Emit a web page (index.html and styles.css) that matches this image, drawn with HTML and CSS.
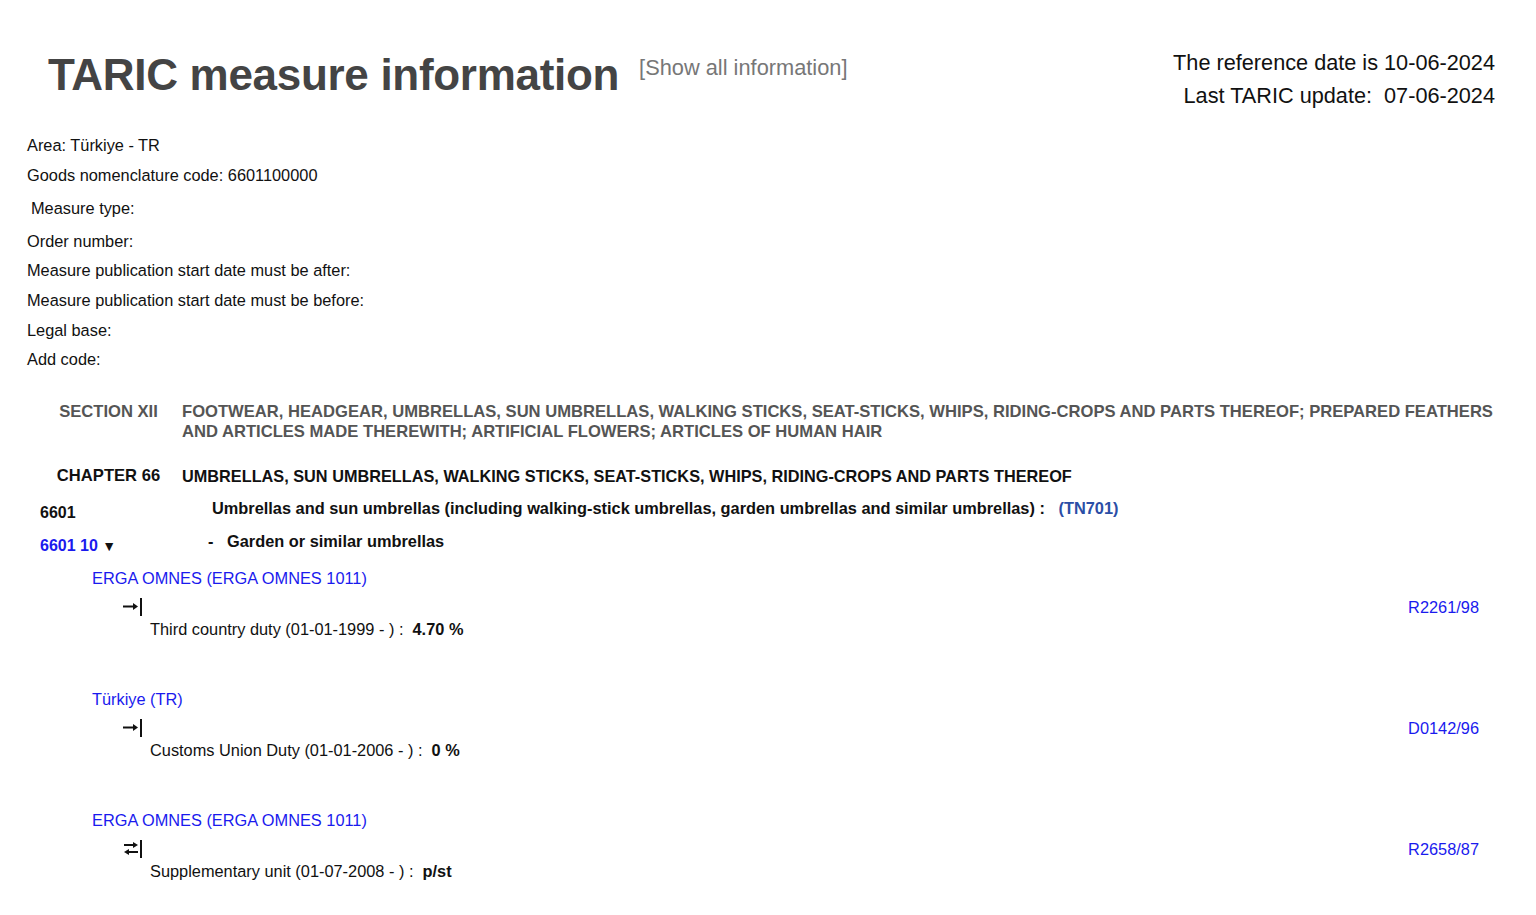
FILE: index.html
```html
<!DOCTYPE html>
<html lang="en">
<head>
    <meta charset="UTF-8">
    <title>TARIC measure information</title>
    <link rel="stylesheet" href="styles.css">
</head>
<body>
    <div class="header">
        <div class="title-wrap">
            <h1>TARIC measure information</h1>
            <a class="show-all" href="#">[Show all information]</a>
        </div>
        <div class="dates">
            <div>The reference date is 10-06-2024</div>
            <div>Last TARIC update:&nbsp; 07-06-2024</div>
        </div>
    </div>

    <div class="criteria">
        <div class="crit">Area: Türkiye - TR</div>
        <div class="crit">Goods nomenclature code: 6601100000</div>
        <div class="crit indent">Measure type:</div>
        <div class="crit">Order number:</div>
        <div class="crit">Measure publication start date must be after:</div>
        <div class="crit">Measure publication start date must be before:</div>
        <div class="crit">Legal base:</div>
        <div class="crit">Add code:</div>
    </div>

    <div class="nomen">
        <div class="nrow section">
            <div class="nlabel">SECTION XII</div>
            <div class="ntext">FOOTWEAR, HEADGEAR, UMBRELLAS, SUN UMBRELLAS, WALKING STICKS, SEAT-STICKS, WHIPS, RIDING-CROPS AND PARTS THEREOF; PREPARED FEATHERS AND ARTICLES MADE THEREWITH; ARTIFICIAL FLOWERS; ARTICLES OF HUMAN HAIR</div>
        </div>
        <div class="nrow chapter">
            <div class="nlabel">CHAPTER 66</div>
            <div class="ntext">UMBRELLAS, SUN UMBRELLAS, WALKING STICKS, SEAT-STICKS, WHIPS, RIDING-CROPS AND PARTS THEREOF</div>
        </div>
        <div class="crow">
            <div class="code">6601</div>
            <div class="desc">Umbrellas and sun umbrellas (including walking-stick umbrellas, garden umbrellas and similar umbrellas) :&nbsp;&nbsp; <a class="note" href="#">(TN701)</a></div>
        </div>
        <div class="crow">
            <div class="code"><a href="#">6601 10</a> <span class="tri">&#9660;</span></div>
            <div class="desc sub">-&nbsp;&nbsp; Garden or similar umbrellas</div>
        </div>
    </div>

    <div class="measures">
        <div class="measure">
            <a class="country" href="#">ERGA OMNES (ERGA OMNES 1011)</a>
            <div class="mrow">
                <svg class="icon" width="20" height="20" viewBox="0 0 20 20">
                    <path d="M0 9.5H12" stroke="#111" stroke-width="2" fill="none"/>
                    <path d="M10 6L15 9.5L10 13Z" fill="#111"/>
                    <path d="M18 1V19" stroke="#111" stroke-width="2"/>
                </svg>
                <a class="reg" href="#">R2261/98</a>
            </div>
            <div class="mtext">Third country duty (01-01-1999 - ) :&nbsp; <b>4.70 %</b></div>
        </div>
        <div class="measure">
            <a class="country" href="#">Türkiye (TR)</a>
            <div class="mrow">
                <svg class="icon" width="20" height="20" viewBox="0 0 20 20">
                    <path d="M0 9.5H12" stroke="#111" stroke-width="2" fill="none"/>
                    <path d="M10 6L15 9.5L10 13Z" fill="#111"/>
                    <path d="M18 1V19" stroke="#111" stroke-width="2"/>
                </svg>
                <a class="reg" href="#">D0142/96</a>
            </div>
            <div class="mtext">Customs Union Duty (01-01-2006 - ) :&nbsp; <b>0 %</b></div>
        </div>
        <div class="measure">
            <a class="country" href="#">ERGA OMNES (ERGA OMNES 1011)</a>
            <div class="mrow">
                <svg class="icon" width="20" height="20" viewBox="0 0 20 20">
                    <path d="M1 6H12" stroke="#111" stroke-width="2" fill="none"/>
                    <path d="M10 3L15 6L10 9Z" fill="#111"/>
                    <path d="M4 13H15" stroke="#111" stroke-width="2" fill="none"/>
                    <path d="M6 10L1 13L6 16Z" fill="#111"/>
                    <path d="M18 1V19" stroke="#111" stroke-width="2"/>
                </svg>
                <a class="reg" href="#">R2658/87</a>
            </div>
            <div class="mtext">Supplementary unit (01-07-2008 - ) :&nbsp; <b>p/st</b></div>
        </div>
    </div>
</body>
</html>
```

FILE: styles.css
```css
body {
    font-family: "Liberation Sans", Arial, sans-serif;
    font-size: 16.35px;
    margin: 0;
    padding: 0 36px 0 27px;
    color: #111;
    background: #fff;
}
a {
    text-decoration: none;
    color: #1a1aee;
}
.header {
    display: flex;
    justify-content: space-between;
    align-items: flex-start;
    padding-top: 46px;
    padding-right: 5px;
}
.title-wrap {
    display: flex;
    align-items: flex-start;
    padding-left: 21px;
}
h1 {
    margin: 0;
    font-size: 44px;
    line-height: 58px;
    color: #444;
    letter-spacing: -0.3px;
}
.show-all {
    color: #777;
    font-size: 21.8px;
    margin-left: 20px;
    margin-top: 9px;
}
.dates {
    text-align: right;
    font-size: 21.7px;
    line-height: 33px;
    color: #111;
}
.criteria {
    margin-top: 23px;
}
.crit {
    line-height: 20px;
    margin-bottom: 9.7px;
}
.crit.indent {
    padding-left: 4px;
    padding-top: 3.3px;
    margin-bottom: 13px;
}
.nomen {
    margin-top: 33px;
    font-weight: bold;
}
.nrow {
    display: flex;
    font-size: 16.6px;
}
.nlabel {
    width: 137px;
    margin-left: 13px;
    margin-right: 5px;
    flex-shrink: 0;
    text-align: center;
}
.ntext {
    line-height: 20px;
}
.section {
    color: #555;
}
.section .nlabel {
    line-height: 20px;
}
.chapter {
    margin-top: 24px;
    line-height: 20px;
}
.chapter .ntext {
    font-size: 16.3px;
}
.crow {
    display: flex;
    margin-top: 12px;
}
.crow + .crow {
    margin-top: 8px;
}
.code {
    box-sizing: border-box;
    width: 185px;
    flex-shrink: 0;
    padding-left: 13px;
    padding-top: 5px;
    line-height: 20px;
    font-size: 16px;
}
.tri {
    font-size: 14px;
    color: #111;
}
.desc {
    line-height: 20px;
}
.desc.sub {
    margin-left: -4px;
}
.note {
    color: #2b4ea6;
}
.measures {
    margin-top: 12px;
    padding-left: 65px;
    padding-right: 21px;
}
.measure {
    margin-bottom: 50px;
}
.country {
    display: block;
    line-height: 20px;
}
.mrow {
    display: flex;
    justify-content: space-between;
    align-items: center;
    margin-top: 9px;
    padding-left: 31px;
}
.reg {
    line-height: 20px;
}
.mtext {
    padding-left: 58px;
    line-height: 20px;
    margin-top: 2px;
}
.mtext b {
    font-weight: bold;
}
```
